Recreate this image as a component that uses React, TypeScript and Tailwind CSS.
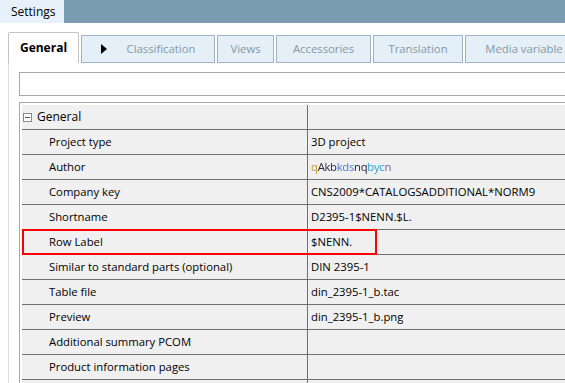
import React from "react";

const rows: { label: string; value: string; redacted?: boolean }[] = [
  { label: "Project type", value: "3D project" },
  { label: "Author", value: "", redacted: true },
  { label: "Company key", value: "CNS2009*CATALOGSADDITIONAL*NORM9" },
  { label: "Shortname", value: "D2395-1$NENN.$L." },
  { label: "Row Label", value: "$NENN." },
  { label: "Similar to standard parts (optional)", value: "DIN 2395-1" },
  { label: "Table file", value: "din_2395-1_b.tac" },
  { label: "Preview", value: "din_2395-1_b.png" },
  { label: "Additional summary PCOM", value: "" },
  { label: "Product information pages", value: "" },
  { label: "", value: "" },
];

function Tab({ label, w, arrow }: { label: string; w: string; arrow?: boolean }) {
  return (
    <div
      className={`${w} h-[28px] shrink-0 flex items-center justify-center gap-[20px] bg-[#e4eff8] border border-[#9fb3c4] text-[#8797a6]`}
    >
      {arrow && (
        <svg width="6" height="10" viewBox="0 0 6 10" className="shrink-0">
          <polygon points="0,0 6,5 0,10" fill="#000" />
        </svg>
      )}
      <span>{label}</span>
    </div>
  );
}

export default function App() {
  return (
    <div
      className="w-[565px] h-[383px] overflow-hidden bg-white text-[11.3px] text-black"
      style={{ fontFamily: '"Open Sans", "Noto Sans", sans-serif' }}
    >
      {/* window title strip */}
      <div className="h-[23px] bg-[#7a9cb1] flex">
        <div className="h-full w-[64px] bg-[#e8f1f9] flex items-center pl-[11px] text-[12px]">Settings</div>
      </div>

      {/* tabs */}
      <div className="mt-[9px] pl-[8px] flex items-end gap-[2px]">
        <div className="w-[71px] h-[31px] shrink-0 bg-white border border-b-0 border-[#c4c4c4] rounded-t-[2px] flex items-center justify-center font-bold text-[12px]">
          General
        </div>
        <Tab label="Classification" w="w-[134px]" arrow />
        <Tab label="Views" w="w-[57px]" />
        <Tab label="Accessories" w="w-[95px]" />
        <Tab label="Translation" w="w-[90px]" />
        <Tab label="Media variable" w="w-[118px]" />
      </div>

      {/* panel */}
      <div className="ml-[8px] border-l border-[#dcdcdc] pl-[10px] pt-[9px] h-[330px]">
        <div className="w-[600px] h-[24px] border border-[#a8a8a8] bg-white" />
        <div className="mt-[6px] w-[600px] border-t border-l border-[#a8a8a8] pt-[2px] pl-[2px]">
          {/* group header */}
          <div className="flex h-[25px] border-b border-[#707070] bg-[#f0f0f0]">
            <div className="w-[285px] flex items-center pl-[1px] gap-[5px]">
              <span className="w-[9px] h-[9px] border border-[#8a8a8a] bg-white flex items-center justify-center">
                <span className="w-[5px] h-px bg-[#555]" />
              </span>
              <span className="text-[12px]">General</span>
            </div>
            <div className="flex-1 border-l border-[#707070]" />
          </div>
          {rows.map((r, i) => (
            <div key={i} className="relative flex h-[25px] border-b border-[#707070] bg-[#f0f0f0]">
              <div className="w-[285px] flex items-center pl-[27px]">{r.label}</div>
              <div className="flex-1 border-l border-[#707070] flex items-center pl-[3px]">
                {r.redacted ? (
                  <span className="blur-[0.6px] tracking-[-0.3px] text-[#2a2540]">
                    <span className="text-[#c79a2e]">q</span>
                    <span>Akb</span>
                    <span className="text-[#4a7bd4]">kds</span>
                    <span>nq</span>
                    <span className="text-[#2b9fd0]">byc</span>
                    <span className="text-[#7a5bb8]">n</span>
                  </span>
                ) : (
                  r.value
                )}
              </div>
              {r.label === "Row Label" && (
                <div className="absolute left-0 top-[-1px] w-[355px] h-[26px] border-2 border-[#ff0000]" />
              )}
            </div>
          ))}
        </div>
      </div>
    </div>
  );
}
